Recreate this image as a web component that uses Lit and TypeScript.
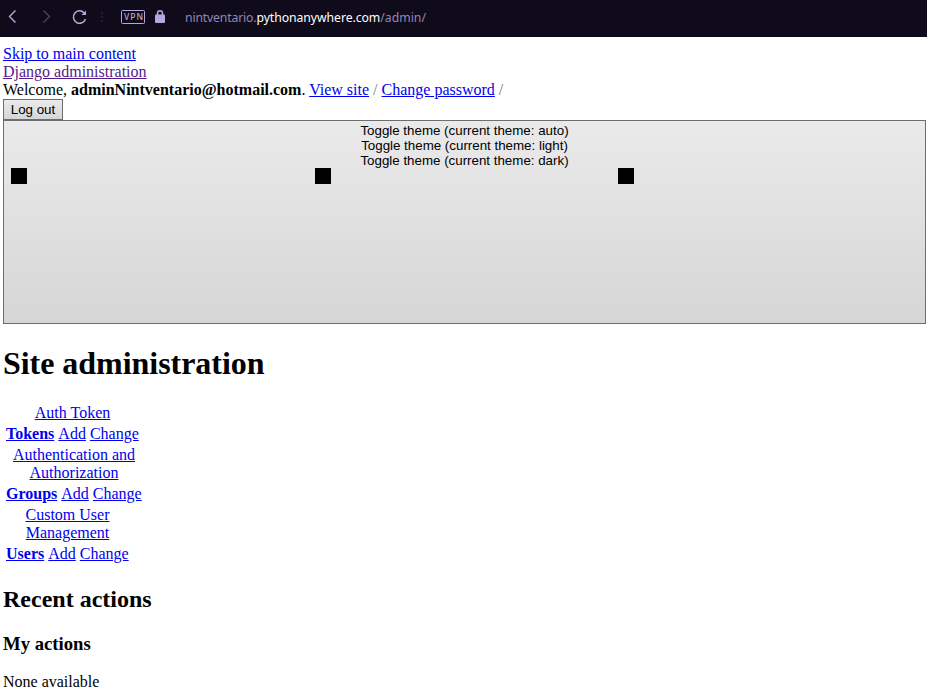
import { LitElement, html, css } from "lit";
import { customElement } from "lit/decorators.js";

interface AppModule {
  caption: string[];
  model: string;
  kind: string;
}

const MODULES: AppModule[] = [
  { caption: ["Auth Token"], model: "Tokens", kind: "tokens" },
  { caption: ["Authentication and", "Authorization"], model: "Groups", kind: "groups" },
  { caption: ["Custom User", "Management"], model: "Users", kind: "users" },
];

@customElement("browser-bar")
class BrowserBar extends LitElement {
  static styles = css`
    :host {
      display: flex;
      align-items: center;
      height: 37px;
      box-sizing: border-box;
      padding-bottom: 3px;
      background: #0f0b1a;
      color: #9187b8;
    }
    svg { display: block; flex: none; }
    .url {
      margin-left: 5px;
      padding-top: 2px;
      display: flex;
      white-space: pre;
      font: 12.25px/18px "Noto Sans", "Open Sans", sans-serif;
      letter-spacing: -0.17px;
    }
    .host { color: #ffffff; letter-spacing: -0.07px; }
    .path { letter-spacing: 0; }
    .vpn { font: 500 8.5px "Noto Sans", sans-serif; }
  `;

  render() {
    return html`
      <svg width="180" height="34" viewBox="0 0 180 34" fill="none">
        <path d="M15.5 10.5 L9.5 16.5 L15.5 22.5" stroke="#b5a9dc" stroke-width="1.4" />
        <path d="M43.5 10.5 L49.5 16.5 L43.5 22.5" stroke="#4a4460" stroke-width="1.4" />
        <path d="M84.2 12.9 A6.2 6.2 0 1 0 85.5 19" stroke="#b5a9dc" stroke-width="1.5" />
        <path d="M86 10.5 V15 H81.5 Z" fill="#b5a9dc" />
        <path d="M101 12h2v2h-2zM101 16h2v2h-2zM101 20h2v2h-2z" fill="#231d38" />
        <rect x="121.5" y="10.5" width="23" height="13" rx="1" stroke="#b5a9dc" />
        <text class="vpn" x="124" y="20" textLength="19" fill="#b5a9dc">VPN</text>
        <path d="M157.5 15 V13.5 A2.5 2.7 0 0 1 162.5 13.5 V15" stroke="#b5a9dc" stroke-width="1.5" />
        <rect x="155" y="14.5" width="10" height="8.5" rx="1" fill="#b5a9dc" />
      </svg>
      <div class="url"><span>nintventario.</span><span class="host">pythonanywhere.com</span><span class="path">/admin/</span></div>
    `;
  }
}

@customElement("app-root")
class AppRoot extends LitElement {
  static styles = css`
    :host {
      display: block;
      height: 696px;
      overflow: hidden;
      background: #fff;
      color: #000;
      font: 16px/18px "Liberation Serif", "Times New Roman", serif;
    }
    .page { padding: 8px 1px 0 3px; }
    a { color: #0000ee; text-decoration: underline; cursor: pointer; }
    .visited { color: #551a8b; }
    .slash { color: #757575; }
    .line { height: 18px; white-space: nowrap; }
    button {
      display: block;
      box-sizing: border-box;
      margin: 0;
      border: 1px solid #6e6e6e;
      border-radius: 0;
      background: linear-gradient(#eaeaea, #d6d6d6);
      color: #000;
      font: 13.333px/15px "Liberation Sans", Arial, sans-serif;
    }
    .logout { width: 60px; height: 21px; padding: 0; white-space: nowrap; }
    .toggle {
      width: 923px;
      height: 204px;
      padding: 2px 7px 0;
      display: flex;
      flex-direction: column;
      justify-content: flex-start;
      text-align: center;
    }
    .icons { display: grid; grid-template-columns: 304px 303px 1fr; }
    .icon { width: 16px; height: 16px; background: #000; }
    h1, h2, h3, p { margin: 0; }
    h1 { padding-top: 21px; font-size: 32px; line-height: 37px; height: 59px; letter-spacing: -0.04px; }
    h2 { padding-top: 20px; font-size: 24px; line-height: 27px; }
    h3 { padding-top: 20px; font-size: 18.72px; line-height: 22px; }
    p { padding-top: 18px; }
    .caption { display: flex; flex-direction: column; text-align: center; }
    .row { display: flex; gap: 4px; padding: 3px; white-space: nowrap; }
    .tokens { width: 139px; }
    .groups { width: 142px; }
    .users { width: 129px; }
  `;

  render() {
    return html`
      <browser-bar></browser-bar>
      <div class="page">
        <div class="line"><a>Skip to main content</a></div>
        <div class="line"><a class="visited">Django administration</a></div>
        <div class="line">Welcome, <strong>adminNintventario@hotmail.com</strong>. <a>View site</a> <span class="slash">/</span> <a>Change password</a> <span class="slash">/</span></div>
        <button class="logout">Log out</button>
        <button class="toggle">
          ${["auto", "light", "dark"].map((t) => html`<div>Toggle theme (current theme: ${t})</div>`)}
          <div class="icons"><div class="icon"></div><div class="icon"></div><div class="icon"></div></div>
        </button>
        <h1>Site administration</h1>
        <div class="modules">
          ${MODULES.map(
            (m) => html`<div class="module ${m.kind}">
              <div class="caption">${m.caption.map((c) => html`<a>${c}</a>`)}</div>
              <div class="row"><a><b>${m.model}</b></a><a>Add</a><a>Change</a></div>
            </div>`
          )}
        </div>
        <h2>Recent actions</h2>
        <h3>My actions</h3>
        <p>None available</p>
      </div>
    `;
  }
}
